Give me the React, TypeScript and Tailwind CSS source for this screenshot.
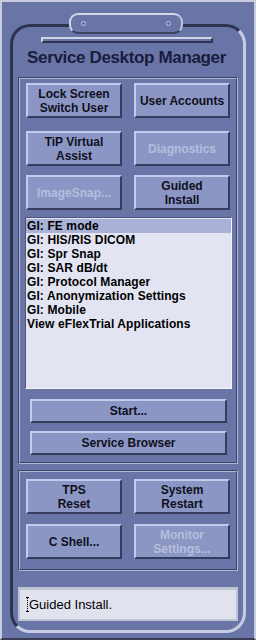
import React from 'react';

interface ButtonProps {
  lines: string[];
  disabled?: boolean;
  className?: string;
}

const Button: React.FC<ButtonProps> = ({ lines, disabled, className = '' }) => (
  <div
    className={`flex flex-col items-center justify-center bg-[#8b96c4] border-2 border-t-[#c3cbec] border-l-[#c3cbec] border-b-[#353c5e] border-r-[#353c5e] text-[12px] leading-[14px] font-bold ${
      disabled ? 'text-[#b6bedd]' : 'text-[#0f1020]'
    } ${className}`}
  >
    {lines.map((l) => (
      <span key={l}>{l}</span>
    ))}
  </div>
);

const Panel: React.FC<{ children: React.ReactNode; className?: string }> = ({ children, className = '' }) => (
  <div className={`border border-t-[#3a4266] border-l-[#3a4266] border-b-[#aeb6da] border-r-[#aeb6da] ${className}`}>
    <div className="border border-t-[#aeb6da] border-l-[#aeb6da] border-b-[#3a4266] border-r-[#3a4266]">
      {children}
    </div>
  </div>
);

const items = [
  'GI: FE mode',
  'GI: HIS/RIS DICOM',
  'GI: Spr Snap',
  'GI: SAR dB/dt',
  'GI: Protocol Manager',
  'GI: Anonymization Settings',
  'GI: Mobile',
  'View eFlexTrial Applications',
];

export default function App() {
  return (
    <div className="relative w-[256px] h-[640px] overflow-hidden bg-[#6875a6] border-2 border-t-[#c9ccdc] border-l-[#c9ccdc] border-r-[#c9ccdc] border-b-[#3a3f55] font-['Liberation_Sans',Arial,sans-serif]">
      {/* chassis */}
      <div className="ml-[8px] mt-[22px] w-[236px] h-[609px] rounded-[20px] border-[3px] border-t-[#2e3350] border-l-[#2e3350] border-r-[#c8cce2] border-b-[#c8cce2] flex flex-col">
        <div className="ml-[28px] mt-[10px] w-[172px] h-[6px] border-2 border-t-[#d0d4ea] border-l-[#d0d4ea] border-b-[#2e3350] border-r-[#2e3350]" />
        <div className="mt-[5px] h-[20px] text-center text-[17px] leading-[20px] font-bold tracking-[-0.35px] text-[#1a1c3c] -ml-[3px] whitespace-nowrap">
          Service Desktop Manager
        </div>

        <Panel className="ml-[5px] mt-[9px] w-[220px]">
          <div className="px-[6px] pt-[4px] pb-[7px] flex flex-col">
            <div className="grid grid-cols-2 gap-x-[12px]">
              <Button lines={['Lock Screen', 'Switch User']} className="h-[35px]" />
              <Button lines={['User Accounts']} className="h-[35px]" />
            </div>
            <div className="grid grid-cols-2 gap-x-[12px] mt-[13px]">
              <Button lines={['TiP Virtual', 'Assist']} className="h-[35px]" />
              <Button lines={['Diagnostics']} disabled className="h-[35px]" />
            </div>
            <div className="grid grid-cols-2 gap-x-[12px] mt-[9px]">
              <Button lines={['ImageSnap...']} disabled className="h-[35px]" />
              <Button lines={['Guided', 'Install']} className="h-[35px]" />
            </div>
            <div className="-ml-[1px] mt-[7px] w-[207px] h-[172px] bg-[#e2e4f2] border border-t-[#4e5680] border-l-[#4e5680] border-b-[#f4f5fb] border-r-[#f4f5fb] pt-[1px]">
              {items.map((t, i) => (
                <div
                  key={t}
                  className={`h-[14px] pl-[1px] text-[12px] leading-[14px] font-bold tracking-[0.1px] text-black whitespace-nowrap ${
                    i === 0 ? 'bg-[#aab2d8]' : ''
                  }`}
                >
                  {t}
                </div>
              ))}
            </div>
            <Button lines={['Start...']} className="ml-[4px] mt-[10px] w-[197px] h-[24px]" />
            <Button lines={['Service Browser']} className="ml-[4px] mt-[8px] w-[197px] h-[24px]" />
          </div>
        </Panel>

        <Panel className="ml-[5px] mt-[6px] w-[220px]">
          <div className="px-[6px] pt-[7px] pb-[10px] flex flex-col">
            <div className="grid grid-cols-2 gap-x-[12px]">
              <Button lines={['TPS', 'Reset']} className="h-[35px]" />
              <Button lines={['System', 'Restart']} className="h-[35px]" />
            </div>
            <div className="grid grid-cols-2 gap-x-[12px] mt-[10px]">
              <Button lines={['C Shell...']} className="h-[35px]" />
              <Button lines={['Monitor', 'Settings...']} disabled className="h-[35px]" />
            </div>
          </div>
        </Panel>

        <div className="ml-[5px] mt-[16px] w-[220px] h-[34px] bg-[#e0e2ee] border-2 border-t-[3px] border-[#bfc3d4] flex items-center pl-[6px]">
          <svg width="3" height="15" viewBox="0 0 3 15" className="shrink-0">
            <line x1="0" y1="0.5" x2="3" y2="0.5" stroke="#000" strokeWidth="1" />
            <line x1="1.5" y1="1" x2="1.5" y2="14" stroke="#000" strokeWidth="1" strokeDasharray="1 1" />
            <line x1="0" y1="14.5" x2="3" y2="14.5" stroke="#000" strokeWidth="1" />
          </svg>
          <span className="text-[13px] leading-[16px] text-black">Guided Install.</span>
        </div>
      </div>

      {/* handle */}
      <div className="absolute left-[67px] top-[11px] w-[114px] h-[21px] rounded-[9px] bg-[#6875a6] border-2 border-t-[#d2d6ea] border-l-[#d2d6ea] border-r-[#c0c4dc] border-b-[#3c4262] flex items-center justify-between px-[10px]">
        <span className="w-[5px] h-[5px] rounded-full border border-[#c8cce0] bg-[#5a6690]" />
        <span className="w-[5px] h-[5px] rounded-full border border-[#c8cce0] bg-[#5a6690]" />
      </div>
    </div>
  );
}
